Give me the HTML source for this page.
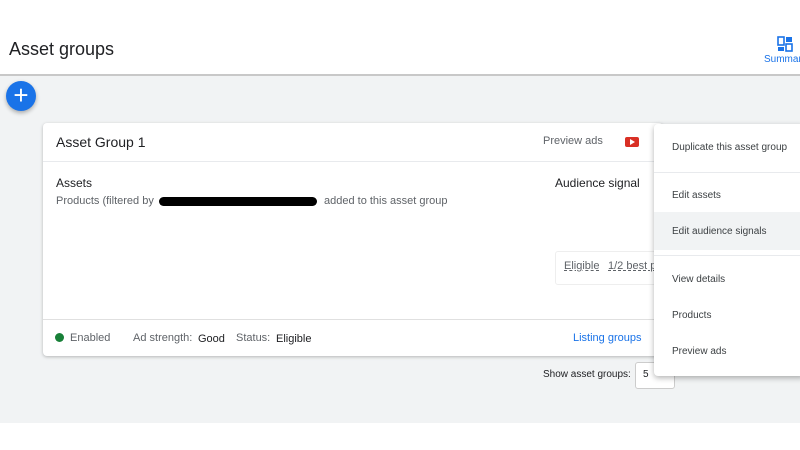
<html><head><style>
body{margin:0;width:800px;height:450px;position:relative;overflow:hidden;background:#fff;font-family:"Liberation Sans",sans-serif;color:#3c4043}
.a{position:absolute;white-space:nowrap}
</style></head><body>
<div class="a" style="left:0;top:74px;width:800px;height:347px;background:#f1f3f4;border-top:2px solid #c8c8c8"></div>
<div class="a" style="left:9px;top:39px;font-size:18px;color:#202124">Asset groups</div>
<svg class="a" style="left:777px;top:36px" width="16" height="16" viewBox="0 0 16 16"><g fill="#1a73e8"><rect x="1" y="1" width="6" height="8" fill="none" stroke="#1a73e8" stroke-width="1.6"/><rect x="9" y="1" width="6" height="5"/><rect x="1" y="11" width="6" height="4"/><rect x="9" y="8" width="6" height="7" fill="none" stroke="#1a73e8" stroke-width="1.6"/></g></svg>
<div class="a" style="left:764px;top:54px;font-size:10px;color:#1a73e8">Summary</div>
<div class="a" style="left:6px;top:81px;width:30px;height:30px;border-radius:50%;background:#1a73e8;box-shadow:0 2px 4px rgba(0,0,0,.3);color:#fff;font-size:26px;line-height:28px;text-align:center">+</div>
<div class="a" style="left:43px;top:123px;width:620px;height:233px;background:#fff;border-radius:4px;box-shadow:0 1px 3px rgba(0,0,0,.25)">
 <div class="a" style="left:0;top:38px;width:620px;border-top:1px solid #e8eaed"></div>
 <div class="a" style="left:0;top:196px;width:620px;border-top:1px solid #e0e0e0"></div>
 <div class="a" style="left:13px;top:11px;font-size:14px;color:#202124">Asset Group 1</div>
 <div class="a" style="left:500px;top:12px;font-size:11px;color:#5f6368">Preview ads</div>
 <div class="a" style="left:582px;top:14px;width:14px;height:10px;background:#d93025;border-radius:2px"></div>
 <svg class="a" style="left:587px;top:16px" width="5" height="6"><path d="M0 0L5 3L0 6Z" fill="#fff"/></svg>
 <div class="a" style="left:13px;top:53px;font-size:12px;color:#202124">Assets</div>
 <div class="a" style="left:13px;top:72px;font-size:11px;color:#5f6368">Products (filtered by</div>
 <div class="a" style="left:116px;top:74px;width:158px;height:9px;background:#000;border-radius:5px"></div>
 <div class="a" style="left:281px;top:72px;font-size:11px;color:#5f6368">added to this asset group</div>
 <div class="a" style="left:512px;top:53px;font-size:12px;color:#202124">Audience signal</div>
 <div class="a" style="left:512px;top:128px;width:110px;height:32px;border:1px solid #eee;border-radius:3px"></div>
 <div class="a" style="left:521px;top:137px;font-size:11px;color:#5f6368;text-decoration:underline dashed">Eligible</div>
 <div class="a" style="left:565px;top:137px;font-size:11px;color:#5f6368;text-decoration:underline dashed">1/2 best p</div>
 <div class="a" style="left:12px;top:210px;width:9px;height:9px;border-radius:50%;background:#188038"></div>
 <div class="a" style="left:27px;top:209px;font-size:11px;color:#5f6368">Enabled</div>
 <div class="a" style="left:90px;top:209px;font-size:11px;color:#5f6368">Ad strength:</div>
 <div class="a" style="left:155px;top:210px;font-size:11px;color:#202124">Good</div>
 <div class="a" style="left:193px;top:209px;font-size:11px;color:#5f6368">Status:</div>
 <div class="a" style="left:233px;top:210px;font-size:11px;color:#202124">Eligible</div>
 <div class="a" style="left:530px;top:209px;font-size:11px;color:#1a73e8">Listing groups</div>
</div>
<div class="a" style="left:543px;top:369px;font-size:10px;color:#202124">Show asset groups:</div>
<div class="a" style="left:635px;top:362px;width:38px;height:25px;border:1px solid #ccc;border-radius:3px;background:#fff"></div>
<div class="a" style="left:643px;top:369px;font-size:10px;color:#202124">5</div>
<div class="a" style="left:654px;top:124px;width:150px;height:252px;background:#fff;box-shadow:0 2px 6px rgba(0,0,0,.3);border-radius:4px 0 0 4px">
 <div class="a" style="left:0;top:48px;width:150px;border-top:1px solid #e8eaed"></div>
 <div class="a" style="left:0;top:88px;width:150px;height:38px;background:#f1f3f4"></div>
 <div class="a" style="left:0;top:131px;width:150px;border-top:1px solid #e8eaed"></div>
 <div class="a" style="left:18px;top:18px;font-size:10px">Duplicate this asset group</div>
 <div class="a" style="left:18px;top:66px;font-size:10px">Edit assets</div>
 <div class="a" style="left:18px;top:102px;font-size:10px">Edit audience signals</div>
 <div class="a" style="left:18px;top:150px;font-size:10px">View details</div>
 <div class="a" style="left:18px;top:186px;font-size:10px">Products</div>
 <div class="a" style="left:18px;top:222px;font-size:10px">Preview ads</div>
</div>
</body></html>
